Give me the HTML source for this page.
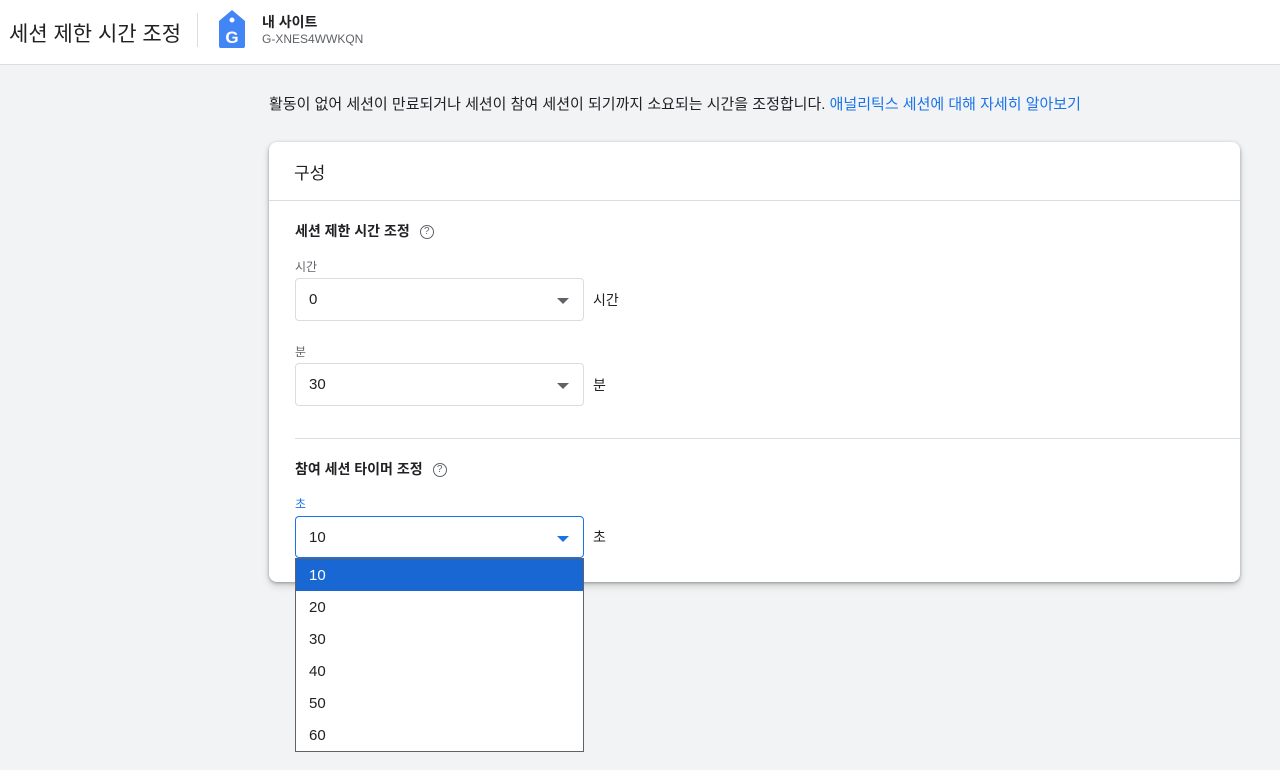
<!DOCTYPE html>
<html><head><meta charset="utf-8"><style>
*{box-sizing:border-box;margin:0;padding:0}
body{width:1280px;height:770px;background:#f1f3f4;font-family:"Liberation Sans","Noto Sans CJK KR",sans-serif;color:#202124;position:relative;overflow:hidden}
.hdr{position:absolute;left:0;top:0;width:1280px;height:65px;background:#fff;border-bottom:1px solid #dadce0}
.abs{position:absolute;white-space:nowrap}
.card{position:absolute;left:269px;top:142px;width:971px;height:440px;background:#fff;border-radius:8px;box-shadow:0 1px 3px rgba(0,0,0,.3),0 4px 8px rgba(0,0,0,.15)}
.sel{position:absolute;left:295px;width:289px;height:43px;border:1px solid #dadce0;border-radius:4px;background:#fff}
.sel span{position:absolute;left:13px;top:12px;font-size:15px}
.arr{position:absolute;right:14px;top:19px;width:0;height:0;border-left:6px solid transparent;border-right:6px solid transparent;border-top:6px solid #5f6368}
.q{display:inline-block;width:14px;height:14px;border:1.5px solid #5f6368;border-radius:50%;font-size:10px;text-align:center;line-height:11px;color:#5f6368;vertical-align:middle;margin-left:10px;font-weight:normal}
.dd{position:absolute;left:295px;top:558px;width:289px;height:194px;background:#fff;border:1px solid #5f6368}
.dd div{height:32px;line-height:34px;padding-left:13px;font-size:15px}
.b{font-weight:600}
</style></head><body>
<div class="hdr"></div>
<div class="abs" style="left:9px;top:18px;font-size:21px;color:#202124">세션 제한 시간 조정</div>
<div class="abs" style="left:197px;top:13px;width:1px;height:34px;background:#dadce0"></div>
<svg class="abs" style="left:217px;top:9px" width="30" height="40" viewBox="0 0 30 40"><path d="M15 1 L28 12 V37 Q28 39 26 39 H4 Q2 39 2 37 V12 Z" fill="#4285f4"/><circle cx="15" cy="11" r="2.5" fill="#fff"/><text x="15" y="34" text-anchor="middle" font-family="Liberation Sans" font-weight="bold" font-size="17" fill="#fff">G</text></svg>
<div class="abs b" style="left:262px;top:12px;font-size:14px">내 사이트</div>
<div class="abs" style="left:262px;top:32px;font-size:12px;color:#5f6368">G-XNES4WWKQN</div>
<div class="abs" style="left:269px;top:93px;font-size:15px">활동이 없어 세션이 만료되거나 세션이 참여 세션이 되기까지 소요되는 시간을 조정합니다. <span style="color:#1a73e8">애널리틱스 세션에 대해 자세히 알아보기</span></div>
<div class="card">
<div class="abs" style="left:25px;top:17px;font-size:17px">구성</div>
<div class="abs" style="left:0;top:58px;width:971px;height:1px;background:#dadce0"></div>
<div class="abs" style="left:26px;top:296px;width:945px;height:1px;background:#dadce0"></div>
</div>
<div class="abs b" style="left:295px;top:221px;font-size:14px">세션 제한 시간 조정<span class="q">?</span></div>
<div class="abs" style="left:295px;top:258px;font-size:12px;color:#5f6368">시간</div>
<div class="sel" style="top:278px"><span>0</span><div class="arr"></div></div>
<div class="abs" style="left:593px;top:290px;font-size:14px">시간</div>
<div class="abs" style="left:295px;top:343px;font-size:12px;color:#5f6368">분</div>
<div class="sel" style="top:363px"><span>30</span><div class="arr"></div></div>
<div class="abs" style="left:593px;top:375px;font-size:14px">분</div>
<div class="abs b" style="left:295px;top:459px;font-size:14px">참여 세션 타이머 조정<span class="q">?</span></div>
<div class="abs" style="left:295px;top:495px;font-size:12px;color:#1a73e8">초</div>
<div class="sel" style="top:516px;height:42px;border:1.5px solid #1a73e8"><span>10</span><div class="arr" style="border-top-color:#1a73e8"></div></div>
<div class="abs" style="left:593px;top:527px;font-size:14px">초</div>
<div class="dd"><div style="background:#1967d2;color:#fff">10</div><div>20</div><div>30</div><div>40</div><div>50</div><div>60</div></div>
</body></html>
